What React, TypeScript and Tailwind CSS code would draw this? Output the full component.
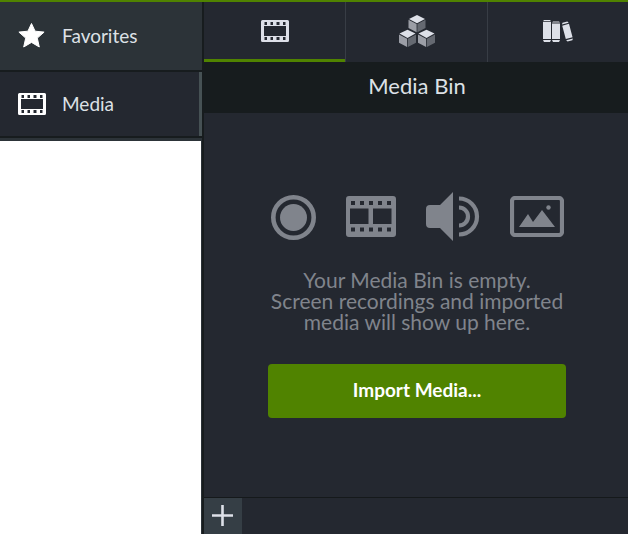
import React from 'react';
import clsx from 'clsx';

const StarIcon: React.FC = () => (
    <svg width="28" height="28" viewBox="0 0 28 28" fill="currentColor" aria-hidden="true">
        <path
            d="M13.500 1.500l3.600 7.700 9 .9-6.800 6 2 8.900-7.800-4.600-7.800 4.600 2-8.900-6.800-6 9-.9z"
            stroke="currentColor"
            strokeLinejoin="round"
        />
    </svg>
);

const FilmIcon: React.FC = () => (
    <svg width="28" height="22" viewBox="0 0 28 22" fill="currentColor" aria-hidden="true">
        <path
            fillRule="evenodd"
            d="M1.500 0h25A1.500 1.500 0 0 1 28 1.500v19a1.500 1.500 0 0 1-1.500 1.500h-25A1.500 1.500 0 0 1 0 20.500v-19A1.500 1.500 0 0 1 1.500 0zM3 6v10h22V6zM3.500 2v3H6V2zM9.500 2v3H12V2zM15.500 2v3h3V2zM22 2v3h2.500V2zM3.500 17v3H6v-3zM9.500 17v3H12v-3zM15.500 17v3h3v-3zM22 17v3h2.500v-3z"
        />
    </svg>
);

const CubesIcon: React.FC = () => (
    <svg width="36" height="32" viewBox="0 0 36 32" aria-hidden="true">
        {['translate(9.500 0)', 'translate(0 14.700)', 'translate(19 14.700)'].map((transform) => (
            <g key={transform} transform={transform}>
                <path d="M8.500 0L16.500 3.900 8.500 8.200.5 3.900z" fill="#dde0e8" />
                <path d="M0 4.800l8.100 4.300v8.200L0 13z" fill="#9b9ea6" />
                <path d="M8.900 9.100L17 4.800V13l-8.100 4.300z" fill="#656971" />
            </g>
        ))}
    </svg>
);

const BooksIcon: React.FC = () => (
    <svg width="31" height="22" viewBox="0 0 31 22" fill="currentColor" aria-hidden="true">
        <path d="M1 0h6l1 1.200H0zM0 2h8v17H0zM0 20h8l-1 2H1z" />
        <path d="M10 1.500h6l1 1H9zM9 3.500h8V19H9zM9 20h8l-1 2h-6z" />
        <g transform="translate(24.500 11.800) rotate(-15)">
            <path d="M-2.500-10h5l1 1.500h-7zM-3.500-7.300h7V6.500h-7zM-3.500 7.800h7L2.500 9.500h-5z" />
        </g>
    </svg>
);

const EmptyIcons: React.FC = () => (
    <div className="flex items-center justify-center gap-[30px]" aria-hidden="true">
        <svg width="45" height="46" viewBox="0 0 45 46">
            <circle cx="22.500" cy="23.500" r="20.200" fill="none" stroke="currentColor" strokeWidth="4.600" />
            <circle cx="22.500" cy="23.500" r="13.500" fill="currentColor" />
        </svg>
        <svg width="50" height="41" viewBox="0 0 50 41" fill="currentColor">
            <path
                fillRule="evenodd"
                d="M3 0h44a3 3 0 0 1 3 3v35a3 3 0 0 1-3 3H3a3 3 0 0 1-3-3V3a3 3 0 0 1 3-3zM4 12.500v15.500h18.500V12.500zM27 12.500v15.500h18.500V12.500zM5 5v4h4V5zM14 5v4h4V5zM23 5v4h4V5zM32 5v4h4V5zM41 5v4h4V5zM5 31.500v4h4v-4zM14 31.500v4h4v-4zM23 31.500v4h4v-4zM32 31.500v4h4v-4zM41 31.500v4h4v-4z"
            />
        </svg>
        <svg width="54" height="49" viewBox="0 0 54 49" fill="currentColor">
            <path d="M4 13h10L27 0v49L14 36H4a4 4 0 0 1-4-4V17a4 4 0 0 1 4-4z" />
            <path
                d="M33 6.500a18 18 0 0 1 0 36M33 15.500a9 9 0 0 1 0 18"
                fill="none"
                stroke="currentColor"
                strokeWidth="4.200"
            />
        </svg>
        <svg width="54" height="41" viewBox="0 0 54 41" fill="currentColor">
            <rect x="2" y="2" width="50" height="37" rx="3" fill="none" stroke="currentColor" strokeWidth="4.200" />
            <path d="M9 31l9-13 5 8 9-12 13 17z" />
            <circle cx="38.500" cy="11.500" r="2.200" />
        </svg>
    </div>
);

const navItems = [
    { label: 'Favorites', icon: <StarIcon />, active: false },
    { label: 'Media', icon: <FilmIcon />, active: true },
];

const tabs = [
    { label: 'Media Bin', icon: <FilmIcon />, active: true },
    { label: 'Assets', icon: <CubesIcon />, active: false },
    { label: 'Library', icon: <BooksIcon />, active: false },
];

const emptyText = 'Your Media Bin is empty.\nScreen recordings and imported\nmedia will show up here.';

const App: React.FC = () => {
    return (
        <div className="flex min-h-screen border-t-2 border-[#508300] bg-white font-['Lato',sans-serif]">
            {/* Sidebar */}
            <nav className="w-[202px] shrink-0 border-r border-[#2b3238]">
                <ul className="-mr-px border-b-3 border-[#2c3338]">
                    {navItems.map((item) => (
                        <li key={item.label} className="border-b-2 border-[#171c1e]">
                            <button
                                type="button"
                                className={clsx(
                                    'flex w-full items-center gap-4 pl-[18px] text-left text-[19px] leading-6 text-[#dde1e6]',
                                    item.active
                                        ? 'h-16 border-r-3 border-[#465154] bg-[#242830]'
                                        : 'h-[68px] bg-[#2c3338]'
                                )}
                            >
                                <span className="text-white">{item.icon}</span>
                                {item.label}
                            </button>
                        </li>
                    ))}
                </ul>
            </nav>

            {/* Media panel */}
            <main className="flex min-w-0 flex-1 flex-col border-l-2 border-[#171c1e] bg-[#242830]">
                <div
                    role="tablist"
                    className="grid h-[60px] grid-cols-[142fr_142fr_140fr] divide-x divide-[#383d45]"
                >
                    {tabs.map((tab) => (
                        <button
                            key={tab.label}
                            type="button"
                            role="tab"
                            aria-label={tab.label}
                            aria-selected={tab.active}
                            className="flex flex-col text-[#dde0e8]"
                        >
                            <span className="flex w-full flex-1 items-center justify-center pt-px">{tab.icon}</span>
                            <span className={clsx('h-[3px] w-full', tab.active && 'bg-[#508300]')} />
                        </button>
                    ))}
                </div>

                <h1 className="bg-[#171c1e] pt-3 pb-[15px] pl-0.5 text-center text-[22px] leading-6 text-[#dde1e6]">
                    Media Bin
                </h1>

                <div className="flex flex-1 flex-col items-center pt-[79px] pl-0.5 text-[#80848c]">
                    <EmptyIcons />
                    <p className="mt-7 text-center text-[21px] leading-[21px] whitespace-pre-line">{emptyText}</p>
                    <button
                        type="button"
                        className="mt-8 h-[54px] w-[298px] rounded bg-[#508300] pb-0.5 text-[19px] font-bold text-white"
                    >
                        Import Media...
                    </button>
                </div>

                <footer className="border-t border-[#15191b]">
                    <button
                        type="button"
                        aria-label="Add"
                        className="flex h-9 w-[38px] items-center justify-center bg-[#353e45] text-[#dde0e8]"
                    >
                        <svg width="22" height="22" viewBox="0 0 22 22" aria-hidden="true">
                            <path d="M10.500 0v21M0 10.500h21" stroke="currentColor" strokeWidth="2.600" />
                        </svg>
                    </button>
                </footer>
            </main>
        </div>
    );
};

export default App;
